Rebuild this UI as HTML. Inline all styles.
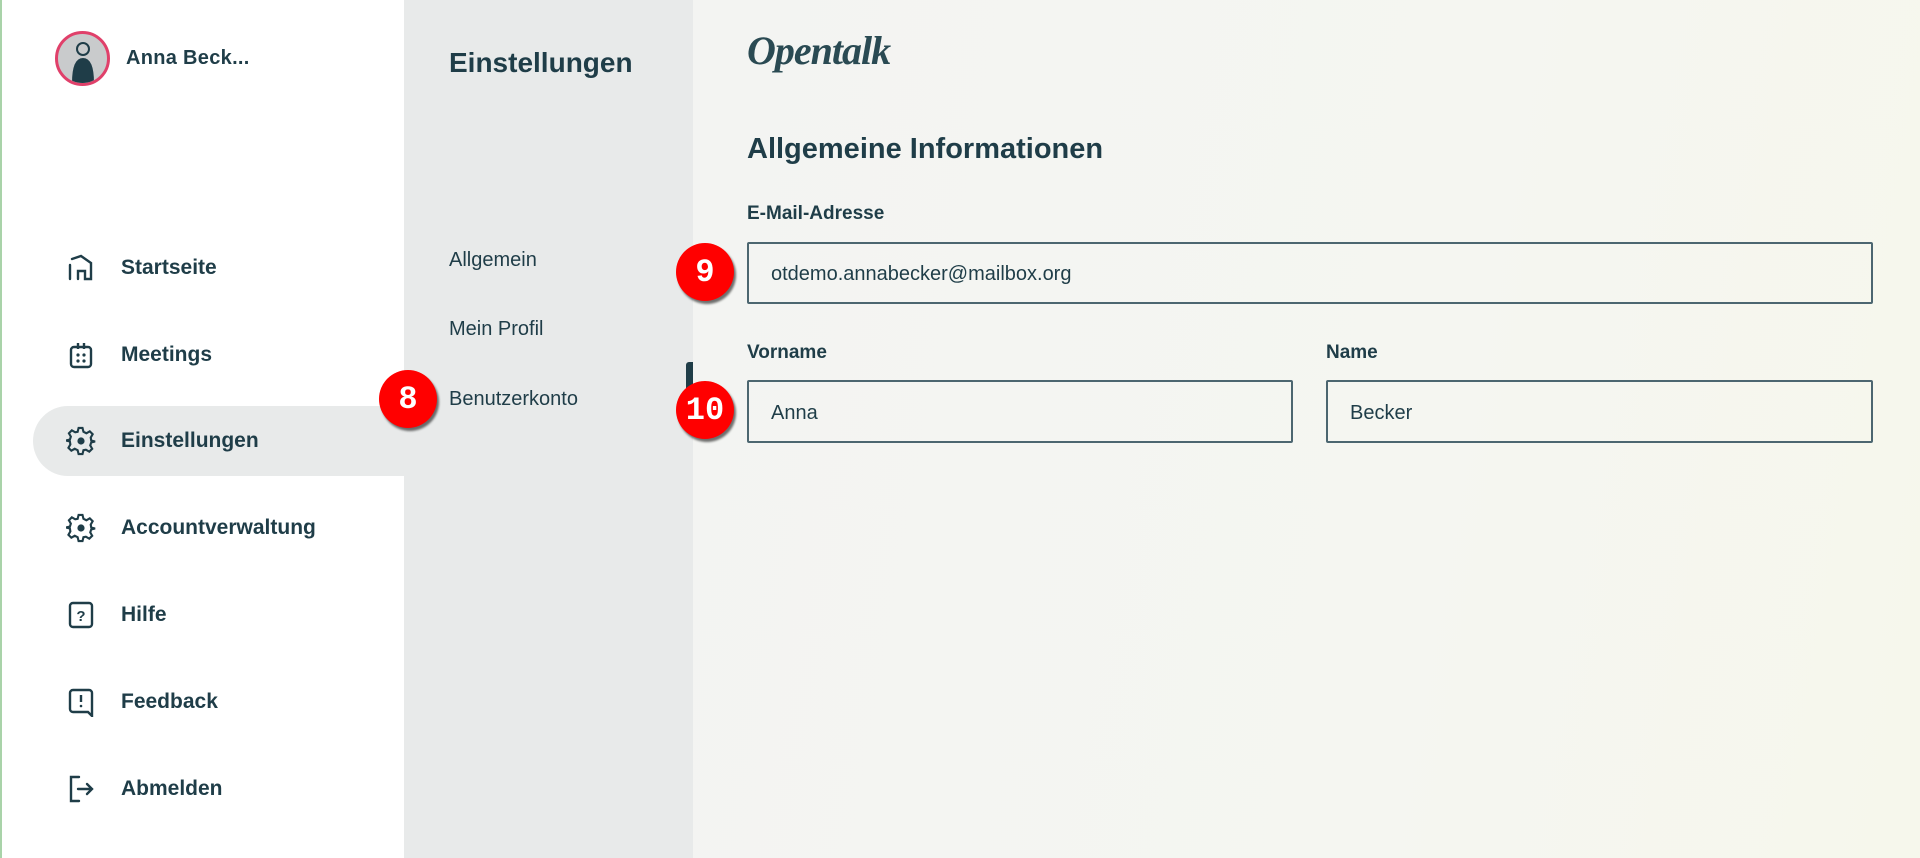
<!DOCTYPE html>
<html><head><meta charset="utf-8">
<style>
*{margin:0;padding:0;box-sizing:border-box}
body{width:1920px;height:858px;overflow:hidden;font-family:"Liberation Sans",sans-serif;color:#1f3d48;position:relative;background:#fff}
.left{position:absolute;left:0;top:0;width:404px;height:858px;background:#fff;border-left:2px solid #a9d3a9}
.mid{position:absolute;left:404px;top:0;width:289px;height:858px;background:#e8eaea}
.right{position:absolute;left:693px;top:0;width:1227px;height:858px;background:linear-gradient(100deg,#f3f4f2 0%,#f5f6f1 60%,#f6f7ec 100%)}
.abs{position:absolute}
.av{left:55px;top:31px;width:55px;height:55px;border-radius:50%;border:3px solid #e0406a;background:#c9cbcc;overflow:hidden}
.name{left:126px;top:47px;font-size:20px;font-weight:bold;letter-spacing:.3px}
.nav{position:absolute;left:0;width:404px;height:70px;display:flex;align-items:center}
.nav svg{position:absolute;left:66px;width:30px;height:30px}
.nav span{position:absolute;left:121px;font-size:21px;font-weight:bold}
.active{left:33px;width:371px;background:#e8eaea;border-radius:35px 0 0 35px}
.sub{position:absolute;left:449px;font-size:20px}
.badge{position:absolute;width:58px;height:58px;border-radius:50%;background:#f00;color:#fff;font-family:"Liberation Mono",monospace;font-weight:bold;font-size:32px;display:flex;align-items:center;justify-content:center;box-shadow:2px 3px 2px rgba(0,0,0,.55)}
.lbl{position:absolute;font-size:19px;font-weight:bold}
.inp{position:absolute;border:2px solid #4c6670;border-radius:2px;font-size:20px;display:flex;align-items:center;padding-left:22px;padding-top:3px}
</style></head><body>
<div class="left"></div><div class="mid"></div><div class="right"></div>

<div class="abs av"><svg width="49" height="49" viewBox="0 0 49 49"><circle cx="25" cy="15" r="6" fill="none" stroke="#1f3d48" stroke-width="2"/><path d="M14 49 Q14 24 25 24 Q36 24 36 49Z" fill="#1f3d48"/></svg></div>
<div class="abs name">Anna Beck...</div>
<div class="abs" style="left:449px;top:47px;font-size:28px;font-weight:bold">Einstellungen</div>

<div class="nav" style="top:233px"><svg viewBox="0 0 30 30" fill="none" stroke="#1f3d48" stroke-width="2.4" stroke-linecap="round"><path d="M4 12 L4 26 M6 6 L15 3 L25 10 L25 26 L19 26 L19 18 L12 18 L12 26"/></svg><span>Startseite</span></div>
<div class="nav" style="top:320px"><svg viewBox="0 0 30 30" fill="none" stroke="#1f3d48" stroke-width="2.4"><rect x="5" y="7" width="20" height="20" rx="3"/><path d="M12 3v6M18 3v6"/><g fill="#1f3d48" stroke="none"><circle cx="12" cy="15" r="1.6"/><circle cx="18" cy="15" r="1.6"/><circle cx="12" cy="21" r="1.6"/><circle cx="18" cy="21" r="1.6"/></g></svg><span>Meetings</span></div>
<div class="nav active" style="top:406px"></div>
<div class="nav" style="top:406px"><svg viewBox="0 0 30 30" fill="none" stroke="#1f3d48" stroke-width="2.2"><path d="M13 3h4l1 4 3 1.5 3.5-2 3 3-2 3.5L26 16l4 1v0l-4 1-1 3 2 3.5-3 3-3.5-2L18 26l-1 4h-4l-1-4-3-1.5-3.5 2-3-3 2-3.5L4 17l-4-1 4-1 1-3-2-3.5 3-3 3.5 2L12 7z" transform="translate(0,-1) scale(.97)"/><circle cx="15" cy="15" r="2.5" fill="#1f3d48"/></svg><span>Einstellungen</span></div>
<div class="nav" style="top:493px"><svg viewBox="0 0 30 30" fill="none" stroke="#1f3d48" stroke-width="2.2"><path d="M13 3h4l1 4 3 1.5 3.5-2 3 3-2 3.5L26 16l4 1v0l-4 1-1 3 2 3.5-3 3-3.5-2L18 26l-1 4h-4l-1-4-3-1.5-3.5 2-3-3 2-3.5L4 17l-4-1 4-1 1-3-2-3.5 3-3 3.5 2L12 7z" transform="translate(0,-1) scale(.97)"/><circle cx="15" cy="15" r="2.5" fill="#1f3d48"/></svg><span>Accountverwaltung</span></div>
<div class="nav" style="top:580px"><svg viewBox="0 0 30 30" fill="none" stroke="#1f3d48" stroke-width="2.4"><rect x="4" y="3" width="22" height="24" rx="3"/><text x="15" y="21" font-size="15" font-weight="bold" text-anchor="middle" fill="#1f3d48" stroke="none" font-family="Liberation Sans">?</text></svg><span>Hilfe</span></div>
<div class="nav" style="top:667px"><svg viewBox="0 0 30 30" fill="none" stroke="#1f3d48" stroke-width="2.4"><path d="M7 3h16a3 3 0 0 1 3 3v23l-4-4H7a3 3 0 0 1-3-3V6a3 3 0 0 1 3-3z"/><path d="M15 8v7"/><circle cx="15" cy="19" r="1.3" fill="#1f3d48" stroke="none"/></svg><span>Feedback</span></div>
<div class="nav" style="top:754px"><svg viewBox="0 0 30 30" fill="none" stroke="#1f3d48" stroke-width="2.4" stroke-linecap="round"><path d="M13 3H5v24h8M12 15h14M21 10l5 5-5 5"/></svg><span>Abmelden</span></div>

<div class="sub" style="top:249px">Allgemein</div>
<div class="sub" style="top:318px">Mein Profil</div>
<div class="sub" style="top:388px">Benutzerkonto</div>
<div class="abs" style="left:686px;top:362px;width:7px;height:32px;background:#1f3d48;border-radius:3px 0 0 3px"></div>

<div class="abs" style="left:747px;top:27px;font-family:'Liberation Serif',serif;font-style:italic;font-weight:bold;font-size:40px;color:#2a4a53;letter-spacing:-1px">Opentalk</div>
<div class="abs" style="left:747px;top:133px;font-size:29px;font-weight:bold">Allgemeine Informationen</div>
<div class="lbl" style="left:747px;top:203px">E-Mail-Adresse</div>
<div class="inp" style="left:747px;top:242px;width:1126px;height:62px">otdemo.annabecker@mailbox.org</div>
<div class="lbl" style="left:747px;top:342px">Vorname</div>
<div class="lbl" style="left:1326px;top:342px">Name</div>
<div class="inp" style="left:747px;top:380px;width:546px;height:63px">Anna</div>
<div class="inp" style="left:1326px;top:380px;width:547px;height:63px">Becker</div>

<div class="badge" style="left:379px;top:370px">8</div>
<div class="badge" style="left:676px;top:243px">9</div>
<div class="badge" style="left:676px;top:381px">10</div>
</body></html>
